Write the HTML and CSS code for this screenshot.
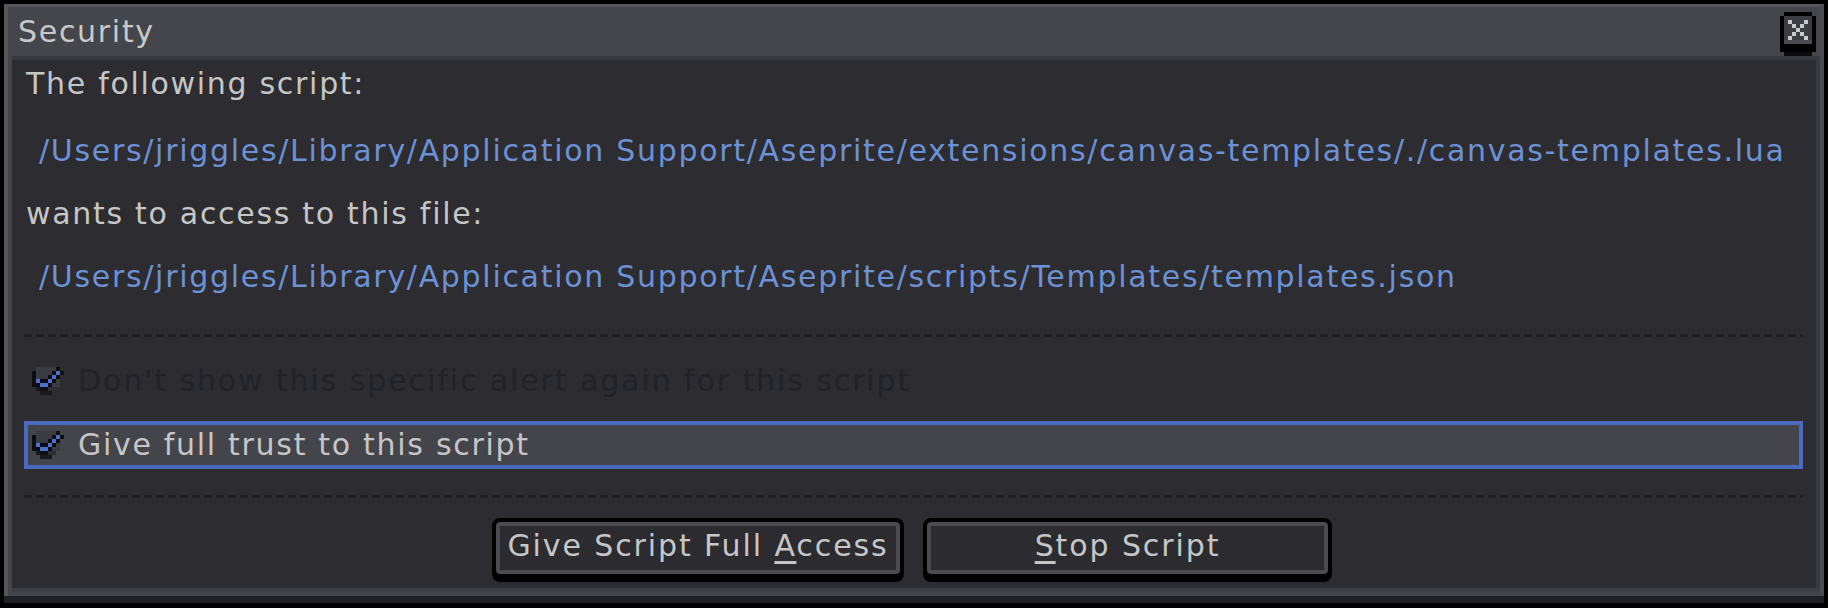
FILE: index.html
```html
<!DOCTYPE html>
<html lang="en">
<head>
<meta charset="utf-8">
<title>Security</title>
<link rel="stylesheet" href="styles.css">
</head>
<body>
<div class="window">
  <div class="titlebar">
    <span class="title">Security</span>
    <button class="close" aria-label="Close">
      <svg width="36" height="44" viewBox="0 0 36 44" shape-rendering="crispEdges">
        <rect x="4" y="0" width="28" height="44" fill="#000"/>
        <rect x="0" y="4" width="36" height="36" fill="#000"/>
        <rect x="4" y="4" width="28" height="28" fill="#3c3d43"/>
        <rect x="4" y="28" width="28" height="4" fill="#4a4b51"/>
        <rect x="4" y="40" width="28" height="4" fill="#0c0c0e"/>
        <g fill="#c9c9c9">
          <rect x="8" y="8" width="4" height="4"/>
          <rect x="24" y="8" width="4" height="4"/>
          <rect x="12" y="12" width="4" height="4"/>
          <rect x="20" y="12" width="4" height="4"/>
          <rect x="16" y="16" width="4" height="4"/>
          <rect x="12" y="20" width="4" height="4"/>
          <rect x="20" y="20" width="4" height="4"/>
          <rect x="8" y="24" width="4" height="4"/>
          <rect x="24" y="24" width="4" height="4"/>
        </g>
      </svg>
    </button>
  </div>
  <div class="content">
    <div class="label r1">The following script:</div>
    <div class="label path r2">/Users/jriggles/Library/Application Support/Aseprite/extensions/canvas-templates/./canvas-templates.lua</div>
    <div class="label r3">wants to access to this file:</div>
    <div class="label path r4">/Users/jriggles/Library/Application Support/Aseprite/scripts/Templates/templates.json</div>
    <div class="sep s1"></div>
    <div class="check disabled">
      <svg class="box" width="32" height="28" viewBox="0 0 8 7" shape-rendering="crispEdges">
        <rect x="1" y="0" width="5" height="1" fill="#3b3c42"/>
        <rect x="6" y="0" width="1" height="1" fill="#0d0d10"/>
        <rect x="0" y="1" width="1" height="4" fill="#0d0d10"/>
        <rect x="1" y="1" width="4" height="1" fill="#3b3c42"/>
        <rect x="5" y="1" width="1" height="1" fill="#0d0d10"/>
        <rect x="6" y="1" width="1" height="1" fill="#4d6fcf"/>
        <rect x="7" y="1" width="1" height="1" fill="#0d0d10"/>
        <rect x="1" y="2" width="3" height="1" fill="#3b3c42"/>
        <rect x="4" y="2" width="1" height="1" fill="#0d0d10"/>
        <rect x="5" y="2" width="1" height="1" fill="#4d6fcf"/>
        <rect x="6" y="2" width="1" height="1" fill="#0d0d10"/>
        <rect x="1" y="3" width="1" height="1" fill="#4d6fcf"/>
        <rect x="2" y="3" width="1" height="1" fill="#0d0d10"/>
        <rect x="3" y="3" width="1" height="1" fill="#0d0d10"/>
        <rect x="4" y="3" width="1" height="1" fill="#4d6fcf"/>
        <rect x="5" y="3" width="1" height="1" fill="#0d0d10"/>
        <rect x="6" y="3" width="1" height="2" fill="#3b3c42"/>
        <rect x="1" y="4" width="1" height="1" fill="#0d0d10"/>
        <rect x="2" y="4" width="2" height="1" fill="#4d6fcf"/>
        <rect x="4" y="4" width="1" height="1" fill="#0d0d10"/>
        <rect x="5" y="4" width="1" height="1" fill="#3b3c42"/>
        <rect x="1" y="5" width="1" height="1" fill="#1a1a1e"/>
        <rect x="2" y="5" width="2" height="1" fill="#0d0d10"/>
        <rect x="4" y="5" width="2" height="1" fill="#2e2f34"/>
        <rect x="2" y="6" width="3" height="1" fill="#1a1a1e"/>
      </svg>
      <span class="text">Don't show this specific alert again for this script</span>
    </div>
    <div class="check selected">
      <svg class="box" width="32" height="28" viewBox="0 0 8 7" shape-rendering="crispEdges">
        <rect x="1" y="0" width="5" height="1" fill="#3b3c42"/>
        <rect x="6" y="0" width="1" height="1" fill="#0d0d10"/>
        <rect x="0" y="1" width="1" height="4" fill="#0d0d10"/>
        <rect x="1" y="1" width="4" height="1" fill="#3b3c42"/>
        <rect x="5" y="1" width="1" height="1" fill="#0d0d10"/>
        <rect x="6" y="1" width="1" height="1" fill="#4d6fcf"/>
        <rect x="7" y="1" width="1" height="1" fill="#0d0d10"/>
        <rect x="1" y="2" width="3" height="1" fill="#3b3c42"/>
        <rect x="4" y="2" width="1" height="1" fill="#0d0d10"/>
        <rect x="5" y="2" width="1" height="1" fill="#4d6fcf"/>
        <rect x="6" y="2" width="1" height="1" fill="#0d0d10"/>
        <rect x="1" y="3" width="1" height="1" fill="#4d6fcf"/>
        <rect x="2" y="3" width="1" height="1" fill="#0d0d10"/>
        <rect x="3" y="3" width="1" height="1" fill="#0d0d10"/>
        <rect x="4" y="3" width="1" height="1" fill="#4d6fcf"/>
        <rect x="5" y="3" width="1" height="1" fill="#0d0d10"/>
        <rect x="6" y="3" width="1" height="2" fill="#3b3c42"/>
        <rect x="1" y="4" width="1" height="1" fill="#0d0d10"/>
        <rect x="2" y="4" width="2" height="1" fill="#4d6fcf"/>
        <rect x="4" y="4" width="1" height="1" fill="#0d0d10"/>
        <rect x="5" y="4" width="1" height="1" fill="#3b3c42"/>
        <rect x="1" y="5" width="1" height="1" fill="#1a1a1e"/>
        <rect x="2" y="5" width="2" height="1" fill="#0d0d10"/>
        <rect x="4" y="5" width="2" height="1" fill="#2e2f34"/>
        <rect x="2" y="6" width="3" height="1" fill="#1a1a1e"/>
      </svg>
      <span class="text">Give full trust to this script</span>
    </div>
    <div class="sep s2"></div>
    <div class="buttons">
      <button class="btn b1">Give Script Full <u>A</u>ccess</button>
      <button class="btn b2"><u>S</u>top Script</button>
    </div>
  </div>
</div>
</body>
</html>
```

FILE: styles.css
```css
* { box-sizing: border-box; }

html, body {
  margin: 0;
  padding: 0;
  background: #000;
}

body {
  width: 1828px;
  height: 608px;
  overflow: hidden;
  font-family: "DejaVu Sans", "Liberation Sans", sans-serif;
  font-size: 30px;
  letter-spacing: 1.7px;
  color: #c6c6c6;
}

.window {
  margin: 4px 4px 0 4px;
  height: 592px;
  background: #45464c;
  border-top: 3px solid #56575c;
  border-left: 4px solid #56575c;
  border-right: 4px solid #4b4c52;
  box-shadow: 0 7px 0 #1f2024;
  display: flex;
  flex-direction: column;
}

.titlebar {
  height: 49px;
  flex: 0 0 49px;
  display: flex;
  justify-content: space-between;
  align-items: flex-start;
  padding-left: 10px;
  padding-right: 4px;
}

.title {
  line-height: 49px;
  color: #c9c9c9;
}

.close {
  margin: 5px 0 0 0;
  padding: 0;
  border: 0;
  background: none;
  width: 36px;
  height: 44px;
  display: block;
  position: relative;
  z-index: 2;
}

.close svg { display: block; }

.content {
  flex: 1;
  margin: 0 0 4px 4px;
  background: #2c2c31;
  border-top: 4px solid #38393e;
  border-right: 4px solid #3a3b40;
  border-bottom: 4px solid #3e3f44;
  padding: 0 0 0 14px;
  display: flex;
  flex-direction: column;
}

.label {
  height: 48px;
  line-height: 48px;
  white-space: nowrap;
}

.path {
  color: #6c91d4;
  padding-left: 13px;
}

.r2 { margin-top: 19px; }
.r3 { margin-top: 15px; }
.r4 { margin-top: 15px; }

.sep {
  height: 3px;
  margin-left: -2px;
  margin-right: 13px;
  background: repeating-linear-gradient(to right, #1f2024 0 8px, transparent 8px 12px);
}

.s1 { margin-top: 33px; }
.s2 { margin-top: 26px; }

.check {
  height: 48px;
  margin-left: -2px;
  margin-right: 13px;
  border: 4px solid transparent;
  padding-left: 4px;
  display: flex;
  align-items: center;
  gap: 14px;
  white-space: nowrap;
}

.check .box { display: block; flex: 0 0 auto; }

.check .text { line-height: 40px; }

.disabled { margin-top: 20px; }
.disabled .text { color: #222328; letter-spacing: 1.9px; }

.selected {
  margin-top: 16px;
  background: #44454b;
  border-color: #4a6abf;
}

.buttons {
  margin-top: 20px;
  display: flex;
  justify-content: center;
  gap: 19px;
  padding-right: 18px;
}

.btn {
  width: 410px;
  height: 60px;
  border: 4px solid #000;
  border-radius: 8px;
  background: #2b2b30;
  box-shadow: inset 0 0 0 4px #4b4c52, 0 4px 0 #000;
  font-family: inherit;
  font-size: 30px;
  letter-spacing: 1.9px;
  color: #c6c6c6;
  line-height: 46px;
  padding: 0 0 5px 0;
}

.b1 { width: 412px; }
.b2 { width: 409px; }

.btn u {
  text-decoration: underline;
  text-decoration-thickness: 3px;
  text-underline-offset: 5px;
}
```
